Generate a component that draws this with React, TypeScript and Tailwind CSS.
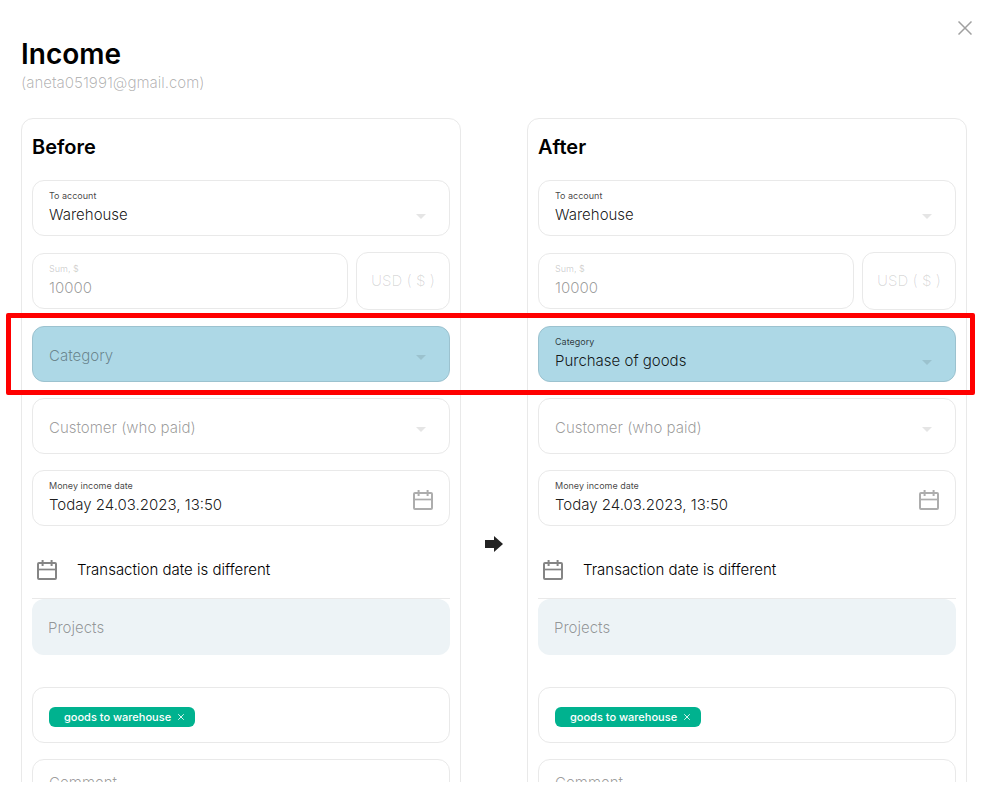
import type { ReactNode } from "react"

const fieldBox = "flex h-14 w-full rounded-xl border border-[#e9e9e9] px-4"
const fieldText = "w-full min-w-0 appearance-none bg-transparent text-[15px] leading-5 font-light outline-none"

function Caret() {
  return (
    <svg className="mt-0.5 mr-[7px] h-[5px] w-[10px] shrink-0 fill-black/10" viewBox="0 0 10 5">
      <path d="M0 0h10L5 5z" />
    </svg>
  )
}

function CalendarIcon({ className }: { className: string }) {
  return (
    <svg className={className} width="20" height="20" viewBox="0 0 20 20" fill="none" stroke="currentColor" strokeWidth="2">
      <rect x="1" y="3" width="18" height="16" rx="1" />
      <path d="M1 9.5h18" strokeWidth="1.7" />
      <path d="M5.6 0v6M14.6 0v6" />
    </svg>
  )
}

function CloseIcon({ className }: { className: string }) {
  return (
    <svg className={className} viewBox="0 0 14 14" fill="none" stroke="currentColor">
      <path d="M0.5 0.5l13 13M13.5 0.5l-13 13" />
    </svg>
  )
}

type SelectFieldProps = {
  id: string
  label: string
  value?: string
  highlight?: boolean
}

function SelectField({ id, label, value, highlight }: SelectFieldProps) {
  return (
    <div
      className={`flex h-14 w-full flex-col gap-px rounded-xl border px-4 ${
        highlight ? "border-[#9cc2cf] bg-[#add8e6]" : "border-[#e9e9e9]"
      } ${value ? "pt-[7px]" : "justify-center pt-1"}`}
    >
      {value && (
        <label htmlFor={id} className="text-[9px] leading-4 text-black/75">
          {label}
        </label>
      )}
      <div className="flex items-center">
        <select
          id={id}
          aria-label={label}
          defaultValue={value || ""}
          className={`${fieldText} ${value ? "text-black/90" : "text-black/40"}`}
        >
          <option value={value || ""}>{value || label}</option>
        </select>
        <Caret />
      </div>
    </div>
  )
}

function InputField({
  id,
  label,
  value,
  muted,
  children,
}: {
  id: string
  label: string
  value: string
  muted?: boolean
  children?: ReactNode
}) {
  return (
    <div className={`${fieldBox} items-start pt-[7px]`}>
      <div className="flex min-w-0 flex-1 flex-col gap-px">
        <label htmlFor={id} className={`text-[9px] leading-4 ${muted ? "text-black/20" : "text-black/75"}`}>
          {label}
        </label>
        <input
          id={id}
          defaultValue={value}
          disabled={muted}
          className={`${fieldText} ${muted ? "text-black/40" : "text-black/90"}`}
        />
      </div>
      {children}
    </div>
  )
}

function Panel({ title, category }: { title: string; category?: string }) {
  const id = title.toLowerCase()
  return (
    <section className="min-w-0 flex-1 rounded-xl border border-[#e9e9e9] px-[10px] pt-3 pb-[10px]">
      <h2 className="mb-[17px] text-xl leading-8 font-semibold">{title}</h2>
      <form className="flex flex-col">
        <div className="flex flex-col gap-4">
          <SelectField id={`${id}-account`} label="To account" value="Warehouse" />
          <div className="flex items-center gap-2">
            <InputField id={`${id}-sum`} label="Sum, $" value="10000" muted />
            <button
              type="button"
              disabled
              className="h-[58px] w-[94px] shrink-0 rounded-xl border border-[#e9e9e9] text-[15px] font-light whitespace-nowrap text-black/15"
            >
              USD ( $ )
            </button>
          </div>
          <SelectField id={`${id}-category`} label="Category" value={category} highlight />
          <SelectField id={`${id}-customer`} label="Customer (who paid)" />
          <InputField id={`${id}-date`} label="Money income date" value="Today 24.03.2023, 13:50">
            <CalendarIcon className="mt-3 shrink-0 text-[#adadad]" />
          </InputField>
          <button
            type="button"
            className="flex h-[57px] items-center gap-5 border-b border-[#e9e9e9] pl-[5px] text-left text-[15px] font-light text-black"
          >
            <CalendarIcon className="text-[#858585]" />
            Transaction date is different
          </button>
        </div>
        <input
          aria-label="Projects"
          placeholder="Projects"
          className="mb-8 h-14 rounded-xl bg-[#edf3f6] px-4 text-[15px] font-light outline-none placeholder:text-black/40"
        />
        <div className={`${fieldBox} mb-4 items-center pt-1`}>
          <span className="flex h-5 items-center gap-[7px] rounded-md bg-[#00b28f] pr-[11px] pl-[15px] text-[11px] font-medium text-white">
            goods to warehouse
            <button type="button" aria-label="Remove tag">
              <CloseIcon className="h-[6px] w-[6px] stroke-2" />
            </button>
          </span>
        </div>
        <textarea
          aria-label="Comment"
          placeholder="Comment"
          className="h-[200px] resize-none rounded-xl border border-[#e9e9e9] px-4 py-3 text-[15px] font-light outline-none placeholder:text-black/40"
        />
      </form>
    </section>
  )
}

export default function App() {
  return (
    <div className="h-screen bg-white pb-1 font-[Inter,sans-serif] text-black">
      <main className="h-full overflow-hidden pr-[17px] pl-[21px]">
        <header className="flex justify-between pt-[21px]">
          <div className="pt-3">
            <h1 className="text-[28px] leading-[42px] font-semibold">Income</h1>
            <p className="text-[15px] leading-4 font-light text-black/30">(aneta051991@gmail.com)</p>
          </div>
          <button type="button" aria-label="Close" className="-mr-[5px] h-[14px] text-[#a0a0a0]">
            <CloseIcon className="h-[14px] w-[14px] stroke-[1.5]" />
          </button>
        </header>
        <div className="relative mt-[27px] flex items-center">
          <Panel title="Before" />
          <div className="flex w-[66px] shrink-0 justify-center">
            <svg width="18" height="16" viewBox="0 0 18 16" className="fill-[#222]">
              <path d="M0 4h9V0l9 8-9 8v-4H0z" />
            </svg>
          </div>
          <Panel title="After" category="Purchase of goods" />
          {/* frame around the changed row */}
          <div className="pointer-events-none absolute top-[195px] -right-2 -left-[15px] h-[82px] rounded-xs border-5 border-[#ff0000]" />
        </div>
      </main>
    </div>
  )
}
